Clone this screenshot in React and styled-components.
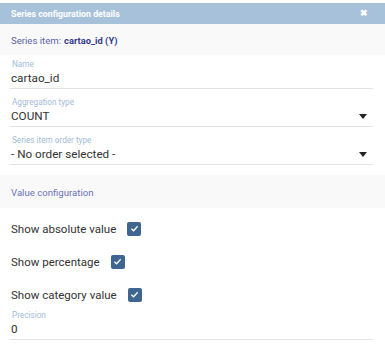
import React from "react";
import styled, { createGlobalStyle } from "styled-components";

const Global = createGlobalStyle`
  html, body { margin: 0; padding: 0; background: #fff; }
  body { font-family: Roboto, "Noto Sans", Arial, sans-serif; }
`;

const Panel = styled.div`
  width: 385px;
  height: 345px;
  padding-top: 3px;
  box-sizing: border-box;
  background: #fff;
  overflow: hidden;
`;

const Header = styled.div`
  height: 21px;
  background: #a7c1da;
  display: flex;
  align-items: center;
  justify-content: space-between;
  padding: 0 17px 0 11px;
  color: #fff;
  font-weight: 700;
  font-size: 8.8px;
`;

const Close = styled.span`
  font-size: 9px;
  font-weight: 700;
  line-height: 1;
`;

const Section = styled.div`
  background: #f9f9fa;
  height: ${(p) => p.$h}px;
  box-sizing: border-box;
  display: flex;
  align-items: center;
  padding: 2px 0 0 11px;
  font-size: ${(p) => p.$fs}px;
  color: ${(p) => p.$color};
  margin-top: ${(p) => p.$mt || 0}px;
`;

const Strong = styled.b`
  color: #353b8c;
  font-weight: 700;
  font-size: 9.3px;
  margin-left: 3px;
`;

const Fields = styled.div`
  padding: 0 12px 0 10px;
`;

const Field = styled.div`
  border-bottom: 1px solid #e2e2e2;
  padding-top: ${(p) => p.$pt}px;
`;

const Label = styled.div`
  font-size: 8.2px;
  color: #9fbbd8;
  line-height: 10px;
  padding-left: 2px;
`;

const Value = styled.div`
  display: flex;
  justify-content: space-between;
  align-items: center;
  font-size: 11.7px;
  color: #333;
  line-height: 16px;
  padding: 1px 0 2px 1px;
`;

const Caret = styled.span`
  width: 0;
  height: 0;
  border-left: 4px solid transparent;
  border-right: 4px solid transparent;
  border-top: 5px solid #222;
  margin-right: 6px;
`;

const Checks = styled.div`
  padding: 13px 0 0 11px;
  display: flex;
  flex-direction: column;
  gap: 18px;
`;

const CheckRow = styled.label`
  display: flex;
  align-items: center;
  gap: 11px;
  font-size: 11.5px;
  color: #333;
  height: 15px;
`;

const Box = styled.span`
  width: 14px;
  height: 14px;
  border-radius: 2px;
  background: #3e6690;
  display: inline-flex;
  align-items: center;
  justify-content: center;
`;

const Bottom = styled.div`
  padding: 8px 12px 0 10px;
`;

function Check({ label }) {
  return (
    <CheckRow>
      {label}
      <Box>
        <svg width="9" height="9" viewBox="0 0 10 10">
          <path d="M1.5 5.2 L4 7.5 L8.5 2.5" fill="none" stroke="#fff" strokeWidth="1.4" />
        </svg>
      </Box>
    </CheckRow>
  );
}

export default function App() {
  return (
    <>
      <Global />
      <Panel>
        <Header>
          <span>Series configuration details</span>
          <Close>✖</Close>
        </Header>
        <Section $h={31} $fs={9.6} $color="#5b64ab">
          Series item:<Strong>cartao_id (Y)</Strong>
        </Section>
        <Fields>
          <Field $pt={4}>
            <Label>Name</Label>
            <Value>cartao_id</Value>
          </Field>
          <Field $pt={8}>
            <Label>Aggregation type</Label>
            <Value>
              COUNT
              <Caret />
            </Value>
          </Field>
          <Field $pt={8}>
            <Label>Series item order type</Label>
            <Value>
              - No order selected -
              <Caret />
            </Value>
          </Field>
        </Fields>
        <Section $h={33} $mt={10} $fs={9.6} $color="#6a72b8">
          Value configuration
        </Section>
        <Checks>
          <Check label="Show absolute value" />
          <Check label="Show percentage" />
          <Check label="Show category value" />
        </Checks>
        <Bottom>
          <Field $pt={0}>
            <Label>Precision</Label>
            <Value>0</Value>
          </Field>
        </Bottom>
      </Panel>
    </>
  );
}
